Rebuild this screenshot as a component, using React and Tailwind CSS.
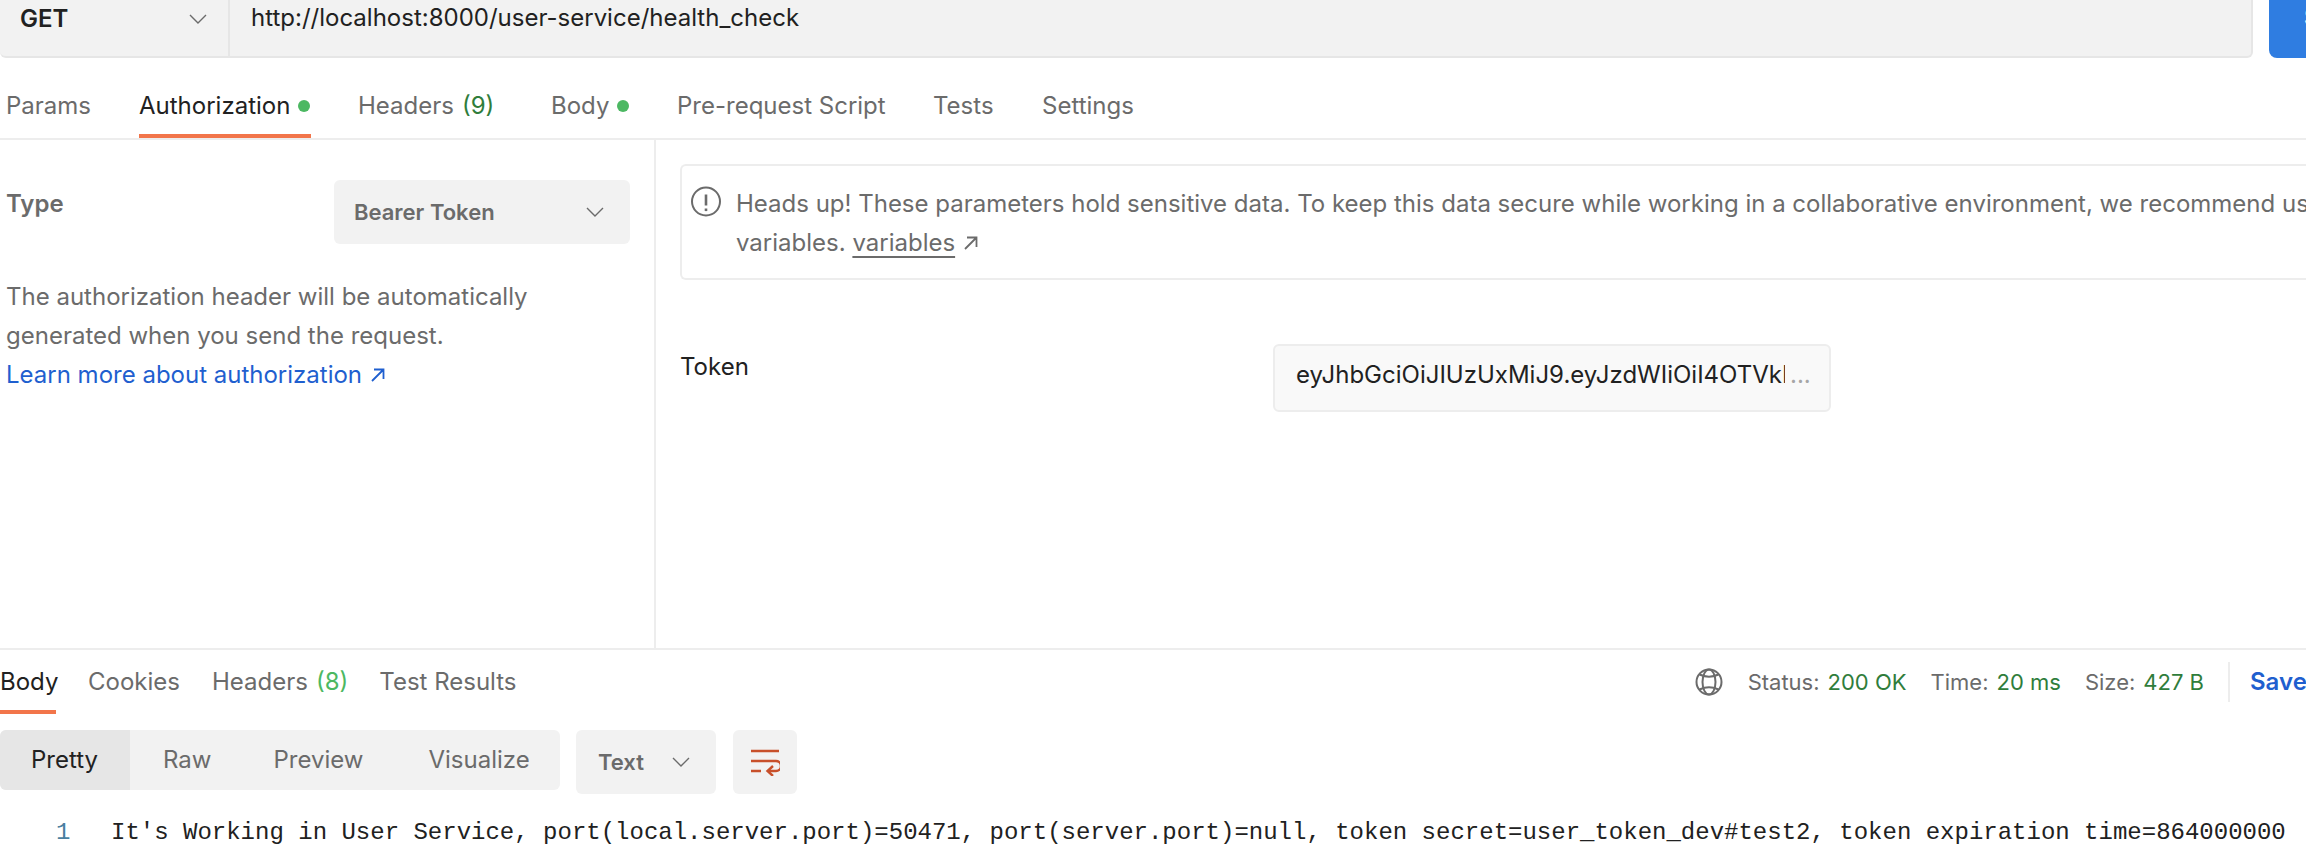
import React from "react";

const Chev = ({ cls }) => (
  <svg width="18" height="10" viewBox="0 0 18 10" fill="none" stroke="currentColor" strokeWidth="1.4" className={cls}>
    <path d="M1 1l8 8 8-8" />
  </svg>
);
const Ext = ({ cls }) => (
  <svg width="15" height="14" viewBox="0 0 15 14" fill="none" stroke="currentColor" strokeWidth="1.8" className={cls}>
    <path d="M2 13L13 2M4 1.500h9.500V11" />
  </svg>
);

function ReqTab({ label, active, dot, count, cls }) {
  return (
    <div className={`relative h-[78px] pt-[14px] flex items-center shrink-0 ${cls}`}>
      <span className={active ? "text-[#212121]" : "text-[#6b6b6b]"}>{label}</span>
      {count && <span className="text-[#2f7d3b] ml-[8px]">{count}</span>}
      {dot && <span className="ml-[8px] w-[12px] h-[12px] rounded-full bg-[#4cb862]" />}
      {active && <span className="absolute left-0 right-0 bottom-0 h-[4px] bg-[#f2754a]" />}
    </div>
  );
}

export default function App() {
  return (
    <div className="w-[2306px] h-[860px] overflow-hidden bg-white text-[24px] leading-none text-[#6b6b6b] flex flex-col font-['Inter',sans-serif]">
      {/* URL bar */}
      <div className="h-[60px] flex shrink-0">
        <div className="w-[2253px] shrink-0 h-[58px] bg-[#f2f2f2] border-b-2 border-r-2 border-[#e6e6e6] rounded-b-[6px] flex">
          <div className="w-[230px] border-r-2 border-[#e6e6e6] flex items-start justify-between pl-[20px] pr-[21px] pt-[6px]">
            <span className="font-semibold text-[#212121] h-[26px] leading-[26px]">GET</span>
            <Chev cls="mt-[8px] text-[#6b6b6b]" />
          </div>
          <div className="pl-[21px] pt-[5px] text-[#212121] h-[26px] leading-[26px] box-content">http://localhost:8000/user-service/health_check</div>
        </div>
        <div className="ml-[16px] w-[37px] shrink-0 h-[58px] bg-[#2f7de1] rounded-bl-[8px] overflow-hidden pl-[35px] pt-[5px] text-white font-semibold leading-[26px]">Send</div>
      </div>

      {/* request tabs */}
      <div className="h-[80px] shrink-0 border-b-2 border-[#ededed] flex pl-[6px]">
        <ReqTab label="Params" cls="w-[133px]" />
        <ReqTab label="Authorization" active dot cls="w-[172px]" />
        <ReqTab label="Headers" count="(9)" cls="w-[193px] ml-[47px]" />
        <ReqTab label="Body" dot cls="w-[126px]" />
        <ReqTab label="Pre-request Script" cls="w-[256px]" />
        <ReqTab label="Tests" cls="w-[109px]" />
        <ReqTab label="Settings" cls="w-[100px]" />
      </div>

      {/* auth */}
      <div className="h-[508px] shrink-0 flex">
        <div className="w-[656px] shrink-0 border-r-2 border-[#ededed] pl-[6px] pt-[40px]">
          <div className="flex justify-between pr-[24px]">
            <span className="font-semibold mt-[12px] h-[24px] leading-[24px]">Type</span>
            <div className="w-[296px] h-[64px] rounded-[6px] bg-[#f2f2f2] flex items-center justify-between pl-[20px] pr-[26px] text-[22px] font-semibold">
              <span>Bearer Token</span>
              <Chev />
            </div>
          </div>
          <div className="mt-[33px] leading-[39px]">
            <div>The authorization header will be automatically</div>
            <div>generated when you send the request.</div>
            <div className="text-[#1f5fcf] flex items-center">Learn more about authorization <Ext cls="ml-[8px]" /></div>
          </div>
        </div>
        <div className="flex-1 min-w-0 overflow-hidden pl-[24px] pt-[24px]">
          <div className="w-[1800px] h-[116px] border-2 border-r-0 border-[#ededed] rounded-l-[6px] flex pl-[8px] pt-[20px] whitespace-nowrap">
            <svg width="32" height="32" viewBox="0 0 32 32" fill="none" stroke="#6b6b6b" strokeWidth="2" className="mr-[14px] shrink-0">
              <circle cx="16" cy="15.500" r="14" />
              <path d="M16 8.500v11" strokeWidth="2.600" />
              <path d="M16 22.500v2.600" strokeWidth="2.600" />
            </svg>
            <div className="leading-[39px] -mt-[2px]">
              <div>Heads up! These parameters hold sensitive data. To keep this data secure while working in a collaborative environment, we recommend using</div>
              <div className="flex items-center">variables.&nbsp;<span className="underline underline-offset-[5px]">variables</span><Ext cls="ml-[8px]" /></div>
            </div>
          </div>
          <div className="flex mt-[64px] items-start">
            <span className="w-[593px] mt-[10px] text-[#212121] h-[26px] leading-[26px]">Token</span>
            <div className="w-[558px] h-[68px] bg-[#f9f9f9] border-2 border-[#ededed] rounded-[6px] flex pl-[21px] pt-[16px] whitespace-nowrap text-[#212121]">
              <span className="w-[489px] overflow-hidden h-[28px] leading-[26px]">eyJhbGciOiJIUzUxMiJ9.eyJzdWIiOiI4OTVkNDE</span>
              <span className="text-[#a6a6a6] ml-[5px] leading-[26px]">...</span>
            </div>
          </div>
        </div>
      </div>

      {/* response tabs */}
      <div className="h-[82px] shrink-0 border-t-2 border-[#ededed] flex items-start">
        <div className="relative h-[64px] w-[56px] shrink-0 flex items-center text-[#212121]">
          Body
          <span className="absolute left-0 right-0 bottom-0 h-[4px] bg-[#f2754a]" />
        </div>
        <div className="h-[64px] flex items-center ml-[32px]">Cookies</div>
        <div className="h-[64px] flex items-center ml-[32px]">Headers<span className="text-[#4cb862] ml-[8px]">(8)</span></div>
        <div className="h-[64px] flex items-center ml-[31px]">Test Results</div>
        <div className="ml-auto mt-[12px] h-[40px] flex items-center text-[22px] whitespace-nowrap">
          <svg width="28" height="28" viewBox="0 0 28 28" fill="none" stroke="#6b6b6b" strokeWidth="2">
            <circle cx="14" cy="14" r="12.500" />
            <ellipse cx="14" cy="14" rx="6.500" ry="12.500" />
            <path d="M4.500 6.500Q14 11 23.500 6.500M4.500 21.500Q14 17 23.500 21.500" />
          </svg>
          <span className="ml-[25px]">Status:</span><span className="ml-[8px] text-[#2f7d3b]">200 OK</span>
          <span className="ml-[24px]">Time:</span><span className="ml-[8px] text-[#2f7d3b]">20 ms</span>
          <span className="ml-[24px]">Size:</span><span className="ml-[8px] text-[#2f7d3b]">427 B</span>
          <span className="ml-[24px] w-[2px] h-[40px] bg-[#ededed]" />
          <span className="ml-[20px] w-[56px] overflow-hidden font-semibold text-[#1f5fcf] text-[24px]">Save Response</span>
        </div>
      </div>

      {/* response toolbar */}
      <div className="h-[64px] shrink-0 flex items-start">
        <div className="w-[560px] h-[60px] bg-[#f2f2f2] rounded-[6px] flex items-center overflow-hidden">
          <div className="w-[130px] h-full bg-[#e6e6e6] text-[#212121] flex items-center pl-[31px]">Pretty</div>
          <span className="ml-[33px]">Raw</span>
          <span className="ml-[62px]">Preview</span>
          <span className="ml-[65px]">Visualize</span>
        </div>
        <div className="ml-[16px] w-[140px] h-[64px] bg-[#f2f2f2] rounded-[6px] flex items-center justify-between pl-[22px] pr-[26px] text-[22px] font-semibold">
          <span>Text</span>
          <Chev />
        </div>
        <div className="ml-[17px] w-[64px] h-[64px] bg-[#f2f2f2] rounded-[6px] flex items-center justify-center">
          <svg width="30" height="28" viewBox="0 0 30 28" fill="none" stroke="#c8502b" strokeWidth="2.400">
            <path d="M1 3h28M1 13h25a5 5 0 0 1 0 10H18M1 23h10" />
            <path d="M23 18l-5.500 5 5.500 5" />
          </svg>
        </div>
      </div>

      {/* response body */}
      <div className="flex-1 flex pt-[25px] whitespace-nowrap font-['Liberation_Mono',monospace] text-[24px]">
        <span className="w-[111px] pl-[56px] text-[#4a7fa0] shrink-0 h-[28px] leading-[28px]">1</span>
        <span className="text-[#212121] h-[28px] leading-[28px]">It's Working in User Service, port(local.server.port)=50471, port(server.port)=null, token secret=user_token_dev#test2, token expiration time=864000000</span>
      </div>
    </div>
  );
}
